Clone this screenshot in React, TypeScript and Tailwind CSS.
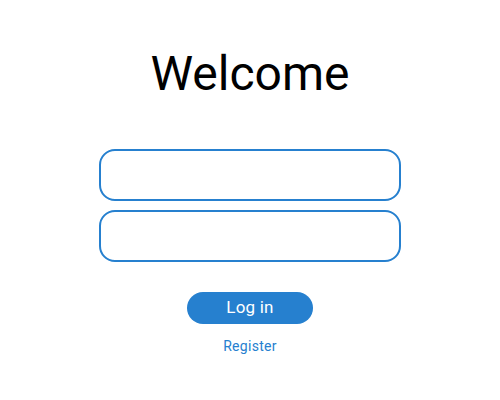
export default function App() {
  return (
    <div className="flex h-[400px] w-[500px] flex-col items-center bg-white font-['Roboto',sans-serif]">
      <h1 className="mt-[44px] text-[48px] leading-[60px] font-normal text-black">Welcome</h1>

      <div className="mt-[45px] flex flex-col gap-[9px]">
        <input
          type="text"
          className="h-[52px] w-[302px] rounded-[16px] border-2 border-[#2680cf] bg-white px-4 outline-none"
        />
        <input
          type="password"
          className="h-[52px] w-[302px] rounded-[16px] border-2 border-[#2680cf] bg-white px-4 outline-none"
        />
      </div>

      <button className="mt-[30px] h-[32px] w-[126px] rounded-full bg-[#2680cf] text-[17px] tracking-[0.2px] text-white">
        Log in
      </button>

      <a href="#" className="mt-[12px] text-[14px] tracking-[0.3px] text-[#2680cf]">
        Register
      </a>
    </div>
  )
}
